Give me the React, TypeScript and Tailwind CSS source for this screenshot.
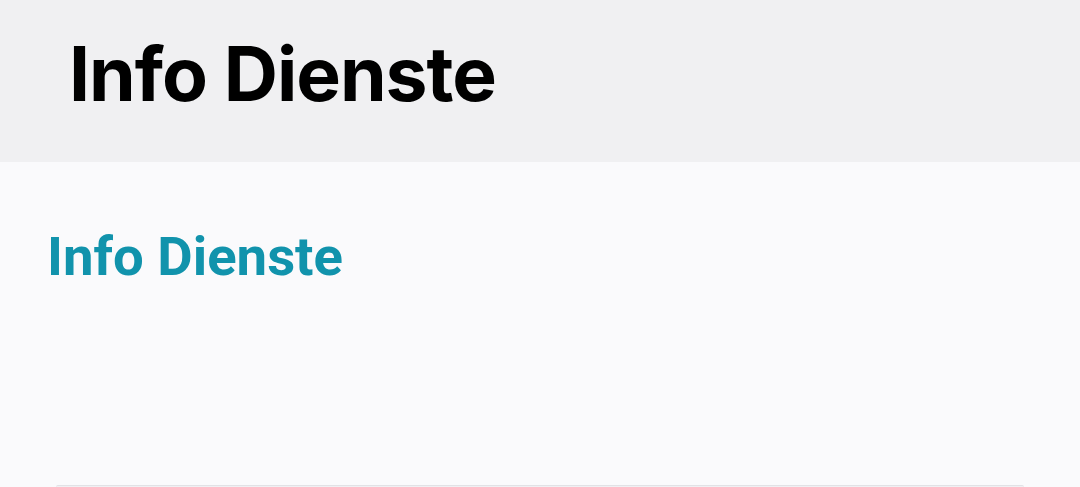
export default function App() {
  return (
    <div className="flex h-[487px] w-[1080px] flex-col overflow-hidden bg-[#fafafc]">
      <header className="flex h-[162px] shrink-0 items-start bg-[#f0f0f2] pl-[69px] pt-[34px]">
        <h1 className="font-['Inter',sans-serif] text-[75px] font-bold leading-[80px] tracking-[-1px] text-black">
          Info Dienste
        </h1>
      </header>
      <main className="flex-1 px-[47px] pt-[64px]">
        <h2 className="font-['Roboto',sans-serif] text-[54.5px] font-bold leading-[60px] text-[#1193ac]">
          Info Dienste
        </h2>
      </main>
      <div className="mx-[56px] h-[2px] shrink-0 rounded-t-[3px] border-t border-[#e2e2e6] bg-[#f0f0f3]" />
    </div>
  );
}
